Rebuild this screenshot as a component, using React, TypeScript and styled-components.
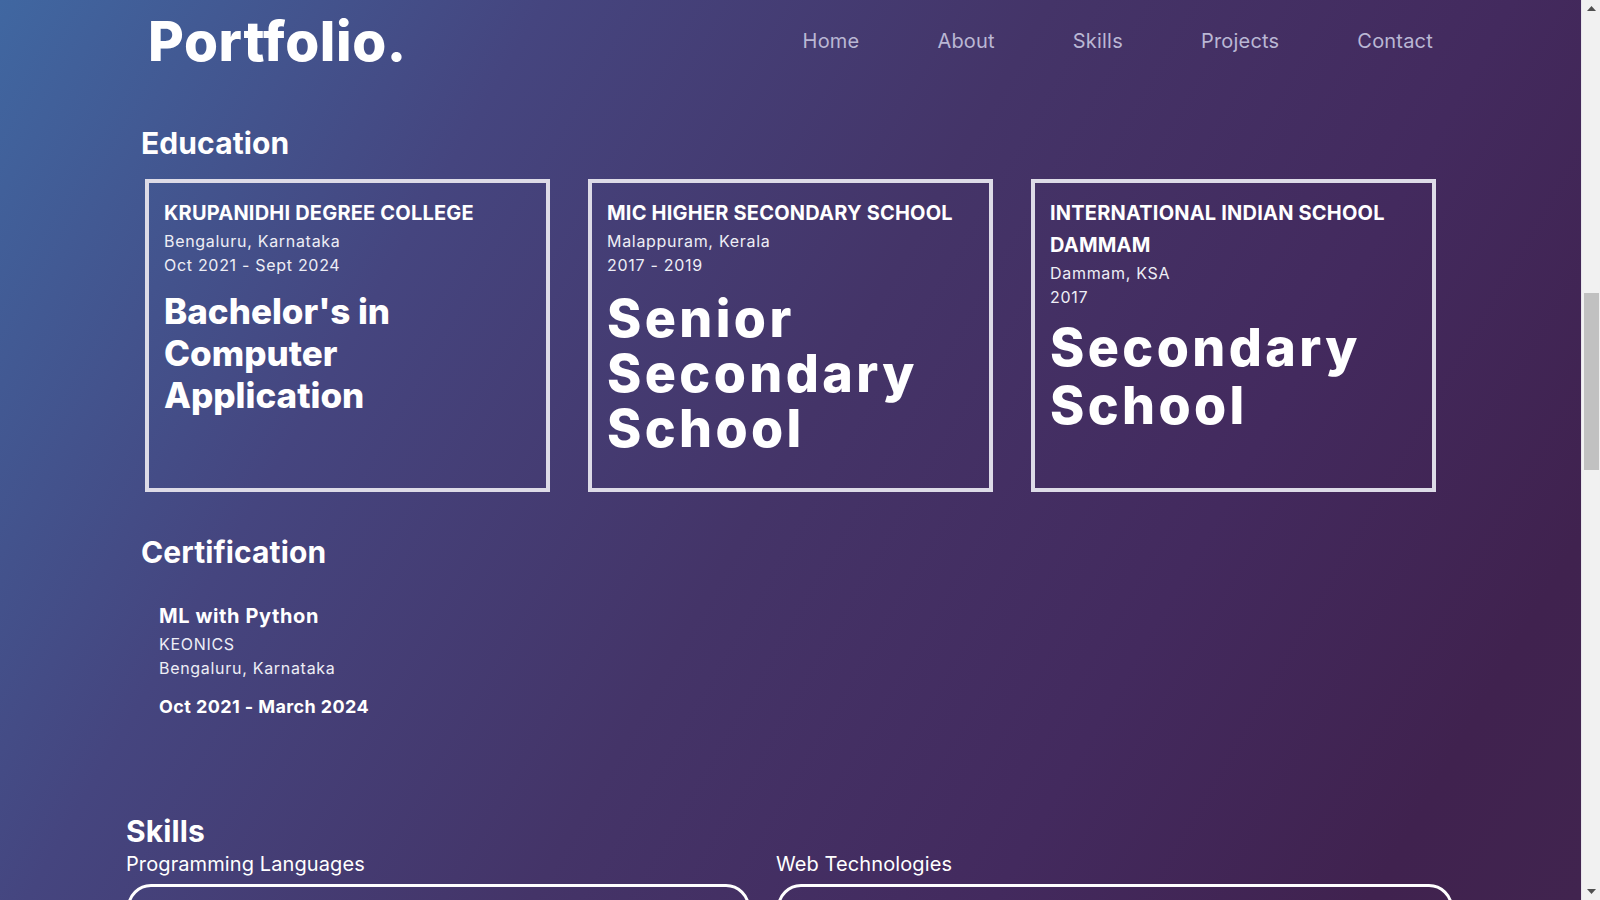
import React from "react";
import styled, { createGlobalStyle } from "styled-components";

const GlobalStyle = createGlobalStyle`
  html, body {
    margin: 0;
    padding: 0;
    height: 100%;
    overflow: hidden;
  }
  body {
    font-family: Inter, "Noto Sans", "DejaVu Sans", sans-serif;
  }
  * { box-sizing: border-box; }
`;

const Page = styled.div`
  display: flex;
  width: 1600px;
  height: 900px;
  overflow: hidden;
`;

const Main = styled.main`
  flex: 1;
  min-width: 0;
  height: 900px;
  overflow: hidden;
  color: #ffffff;
  background: linear-gradient(
    120deg,
    #4067a1 0%,
    #45457f 26%,
    #443468 50%,
    #432a5e 72%,
    #40224f 90%,
    #41244f 100%
  );
`;

const Header = styled.header`
  display: flex;
  align-items: center;
  justify-content: space-between;
  padding: 11px 148px 0 148px;
`;

const Logo = styled.div`
  font-size: 55px;
  line-height: 60px;
  font-weight: 800;
  letter-spacing: 0.6px;
  color: #ffffff;
`;

const Nav = styled.nav`
  display: flex;
  gap: 78px;
`;

const NavLink = styled.a`
  font-size: 20px;
  line-height: 24px;
  color: #bab7d4;
  text-decoration: none;
  letter-spacing: 0.2px;
`;

const Section = styled.section<{ $indent: number; $top: number }>`
  padding-left: ${(p) => p.$indent}px;
  margin-top: ${(p) => p.$top}px;
`;

const SectionTitle = styled.h2`
  margin: 0;
  font-size: 30px;
  line-height: 36px;
  font-weight: 700;
  letter-spacing: 0.1px;
`;

const CardRow = styled.div`
  display: flex;
  gap: 38px;
  margin-top: 18px;
  padding-left: 4px;
`;

const Card = styled.article`
  width: 405px;
  height: 313px;
  border: 4px solid #dddbe7;
  padding: 14px 15px;
`;

const CardTitle = styled.h3`
  margin: 0;
  font-size: 20px;
  line-height: 32px;
  font-weight: 700;
  letter-spacing: 0.2px;
  text-transform: uppercase;
`;

const Meta = styled.p`
  margin: 0;
  font-size: 16px;
  line-height: 24px;
  letter-spacing: 0.7px;
  color: #eeeef6;
`;

const Degree = styled.h1<{ $size: number; $lh: number; $mt: number; $ls: number }>`
  margin: ${(p) => p.$mt}px 0 0 0;
  font-size: ${(p) => p.$size}px;
  line-height: ${(p) => p.$lh}px;
  font-weight: 800;
  letter-spacing: ${(p) => p.$ls}em;
`;

const CertItem = styled.div`
  padding-left: 18px;
  margin-top: 30px;
`;

const CertTitle = styled.h3`
  margin: 0;
  font-size: 20px;
  line-height: 32px;
  font-weight: 700;
  letter-spacing: 0.6px;
`;

const CertDate = styled.p`
  margin: 13px 0 0 0;
  font-size: 18px;
  line-height: 27px;
  font-weight: 700;
  letter-spacing: 0.4px;
`;

const SkillsGrid = styled.div`
  display: grid;
  grid-template-columns: 624px 677px;
  column-gap: 26px;
  margin-top: 3px;
`;

const SkillColumn = styled.div`
  display: flex;
  flex-direction: column;
`;

const SkillLabel = styled.h4`
  margin: 0;
  font-size: 20px;
  line-height: 24px;
  font-weight: 400;
  letter-spacing: 0.1px;
`;

const SkillBox = styled.div`
  margin: 8px 0 0 1px;
  height: 180px;
  border: 3px solid #ffffff;
  border-radius: 24px;
`;

const Scrollbar = styled.div`
  width: 19px;
  height: 900px;
  background: #f1f1f1;
  border-left: 1px solid #e6e4ea;
  display: flex;
  flex-direction: column;
  align-items: center;
`;

const ScrollArrow = styled.div`
  height: 17px;
  width: 100%;
  display: flex;
  align-items: center;
  justify-content: center;
`;

const ScrollRail = styled.div`
  flex: 1;
  width: 100%;
  display: flex;
  justify-content: center;
`;

const Thumb = styled.div`
  margin-top: 276px;
  width: 15px;
  height: 177px;
  background: #c1c1c1;
`;

const Arrow = ({ up }: { up?: boolean }) => (
  <svg width="9" height="5" viewBox="0 0 9 5">
    {up ? (
      <polygon points="0,5 4.5,0 9,5" fill="#505050" />
    ) : (
      <polygon points="0,0 4.5,5 9,0" fill="#505050" />
    )}
  </svg>
);

const education = [
  {
    school: "KRUPANIDHI DEGREE COLLEGE",
    place: "Bengaluru, Karnataka",
    years: "Oct 2021 - Sept 2024",
    degree: "Bachelor's in Computer Application",
    size: 35,
    lh: 42,
    mt: 13,
    ls: 0,
  },
  {
    school: "MIC HIGHER SECONDARY SCHOOL",
    place: "Malappuram, Kerala",
    years: "2017 - 2019",
    degree: "Senior Secondary School",
    size: 52,
    lh: 55,
    mt: 14,
    ls: 0.065,
  },
  {
    school: "INTERNATIONAL INDIAN SCHOOL DAMMAM",
    place: "Dammam, KSA",
    years: "2017",
    degree: "Secondary School",
    size: 52,
    lh: 58,
    mt: 10,
    ls: 0.065,
  },
];

export default function App() {
  return (
    <>
      <GlobalStyle />
      <Page>
        <Main>
          <Header>
            <Logo>Portfolio.</Logo>
            <Nav>
              <NavLink href="#home">Home</NavLink>
              <NavLink href="#about">About</NavLink>
              <NavLink href="#skills">Skills</NavLink>
              <NavLink href="#projects">Projects</NavLink>
              <NavLink href="#contact">Contact</NavLink>
            </Nav>
          </Header>

          <Section $indent={141} $top={54}>
            <SectionTitle>Education</SectionTitle>
            <CardRow>
              {education.map((e) => (
                <Card key={e.school}>
                  <CardTitle>{e.school}</CardTitle>
                  <Meta>{e.place}</Meta>
                  <Meta>{e.years}</Meta>
                  <Degree $size={e.size} $lh={e.lh} $mt={e.mt} $ls={e.ls}>
                    {e.degree}
                  </Degree>
                </Card>
              ))}
            </CardRow>
          </Section>

          <Section $indent={141} $top={42}>
            <SectionTitle>Certification</SectionTitle>
            <CertItem>
              <CertTitle>ML with Python</CertTitle>
              <Meta>KEONICS</Meta>
              <Meta>Bengaluru, Karnataka</Meta>
              <CertDate>Oct 2021 - March 2024</CertDate>
            </CertItem>
          </Section>

          <Section $indent={126} $top={93}>
            <SectionTitle>Skills</SectionTitle>
            <SkillsGrid>
              <SkillColumn>
                <SkillLabel>Programming Languages</SkillLabel>
                <SkillBox />
              </SkillColumn>
              <SkillColumn>
                <SkillLabel>Web Technologies</SkillLabel>
                <SkillBox />
              </SkillColumn>
            </SkillsGrid>
          </Section>
        </Main>
        <Scrollbar>
          <ScrollArrow>
            <Arrow up />
          </ScrollArrow>
          <ScrollRail>
            <Thumb />
          </ScrollRail>
          <ScrollArrow>
            <Arrow />
          </ScrollArrow>
        </Scrollbar>
      </Page>
    </>
  );
}
